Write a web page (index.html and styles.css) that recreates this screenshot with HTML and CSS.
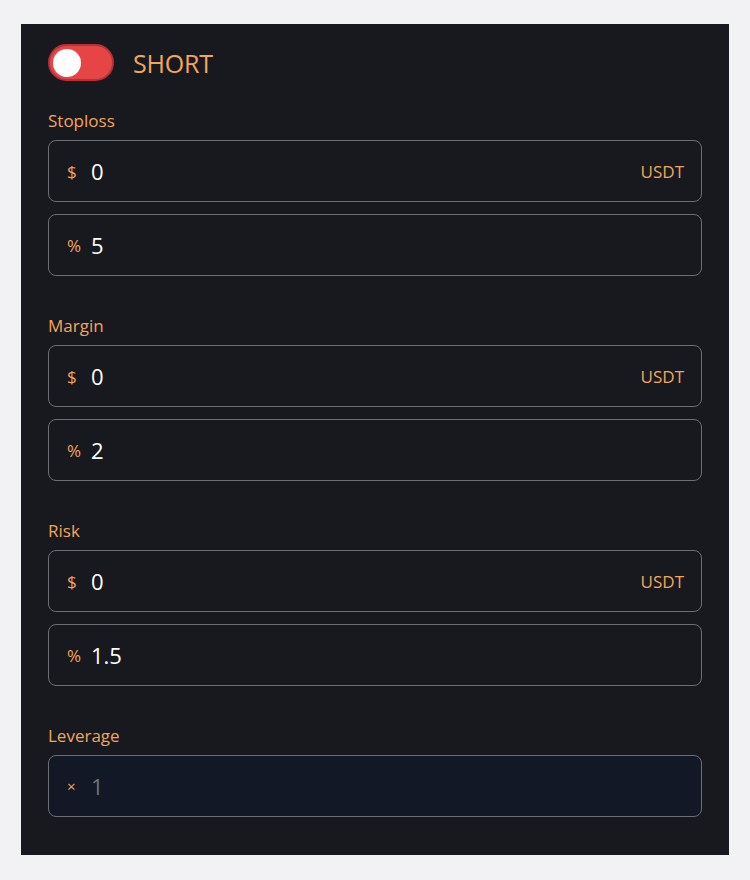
FILE: index.html
```html
<!DOCTYPE html>
<html>
<head>
<meta charset="utf-8">
<link rel="stylesheet" href="styles.css">
</head>
<body>
<div class="panel">
  <div class="header">
    <div class="toggle"><div class="knob"></div></div>
    <span class="side">SHORT</span>
  </div>

  <div class="section">
    <div class="label">Stoploss</div>
    <div class="field"><span class="prefix">$</span><span class="value">0</span><span class="suffix">USDT</span></div>
    <div class="field"><span class="prefix">%</span><span class="value">5</span></div>
  </div>

  <div class="section">
    <div class="label">Margin</div>
    <div class="field"><span class="prefix">$</span><span class="value">0</span><span class="suffix">USDT</span></div>
    <div class="field"><span class="prefix">%</span><span class="value">2</span></div>
  </div>

  <div class="section">
    <div class="label">Risk</div>
    <div class="field"><span class="prefix">$</span><span class="value">0</span><span class="suffix">USDT</span></div>
    <div class="field"><span class="prefix">%</span><span class="value">1.5</span></div>
  </div>

  <div class="section">
    <div class="label">Leverage</div>
    <div class="field disabled"><span class="prefix">×</span><span class="value">1</span></div>
  </div>
</div>
</body>
</html>
```

FILE: styles.css
```css
* { box-sizing: border-box; }
html, body { margin: 0; padding: 0; }
body {
  background: #f2f2f4;
  font-family: "Open Sans", "Noto Sans", sans-serif;
  padding: 24px 21px 25px 21px;
}
.panel {
  background: #18181f;
  padding: 20px 27px 38px 27px;
  display: flex;
  flex-direction: column;
  gap: 40px;
}
.header {
  display: flex;
  align-items: center;
  gap: 19px;
  height: 37px;
  margin-bottom: -10px;
}
.toggle {
  width: 66px;
  height: 37px;
  border-radius: 19px;
  background: #e64545;
  border: 2px solid #b8303a;
  display: flex;
  align-items: center;
  padding-left: 3px;
}
.knob {
  width: 28px;
  height: 28px;
  border-radius: 50%;
  background: #ffffff;
}
.side {
  color: #f2a65a;
  font-size: 25px;
  line-height: 32px;
  letter-spacing: -0.2px;
}
.section {
  display: flex;
  flex-direction: column;
  gap: 12px;
}
.label {
  color: #f2a65a;
  font-size: 17px;
  line-height: 20px;
  margin-bottom: -3px;
}
.field {
  height: 62px;
  border: 1px solid #6d6d76;
  border-radius: 8px;
  display: flex;
  align-items: center;
  padding: 0 17px 0 18px;
  background: #18181f;
}
.prefix {
  color: #f2a65a;
  font-size: 17px;
  width: 24px;
}
.value {
  color: #ffffff;
  font-size: 22px;
  flex: 1;
}
.suffix {
  color: #f2a65a;
  font-size: 17px;
}
.disabled {
  background: #121826;
}
.disabled .value {
  color: #6b7280;
}
.disabled .prefix {
  font-size: 15px;
}
```
